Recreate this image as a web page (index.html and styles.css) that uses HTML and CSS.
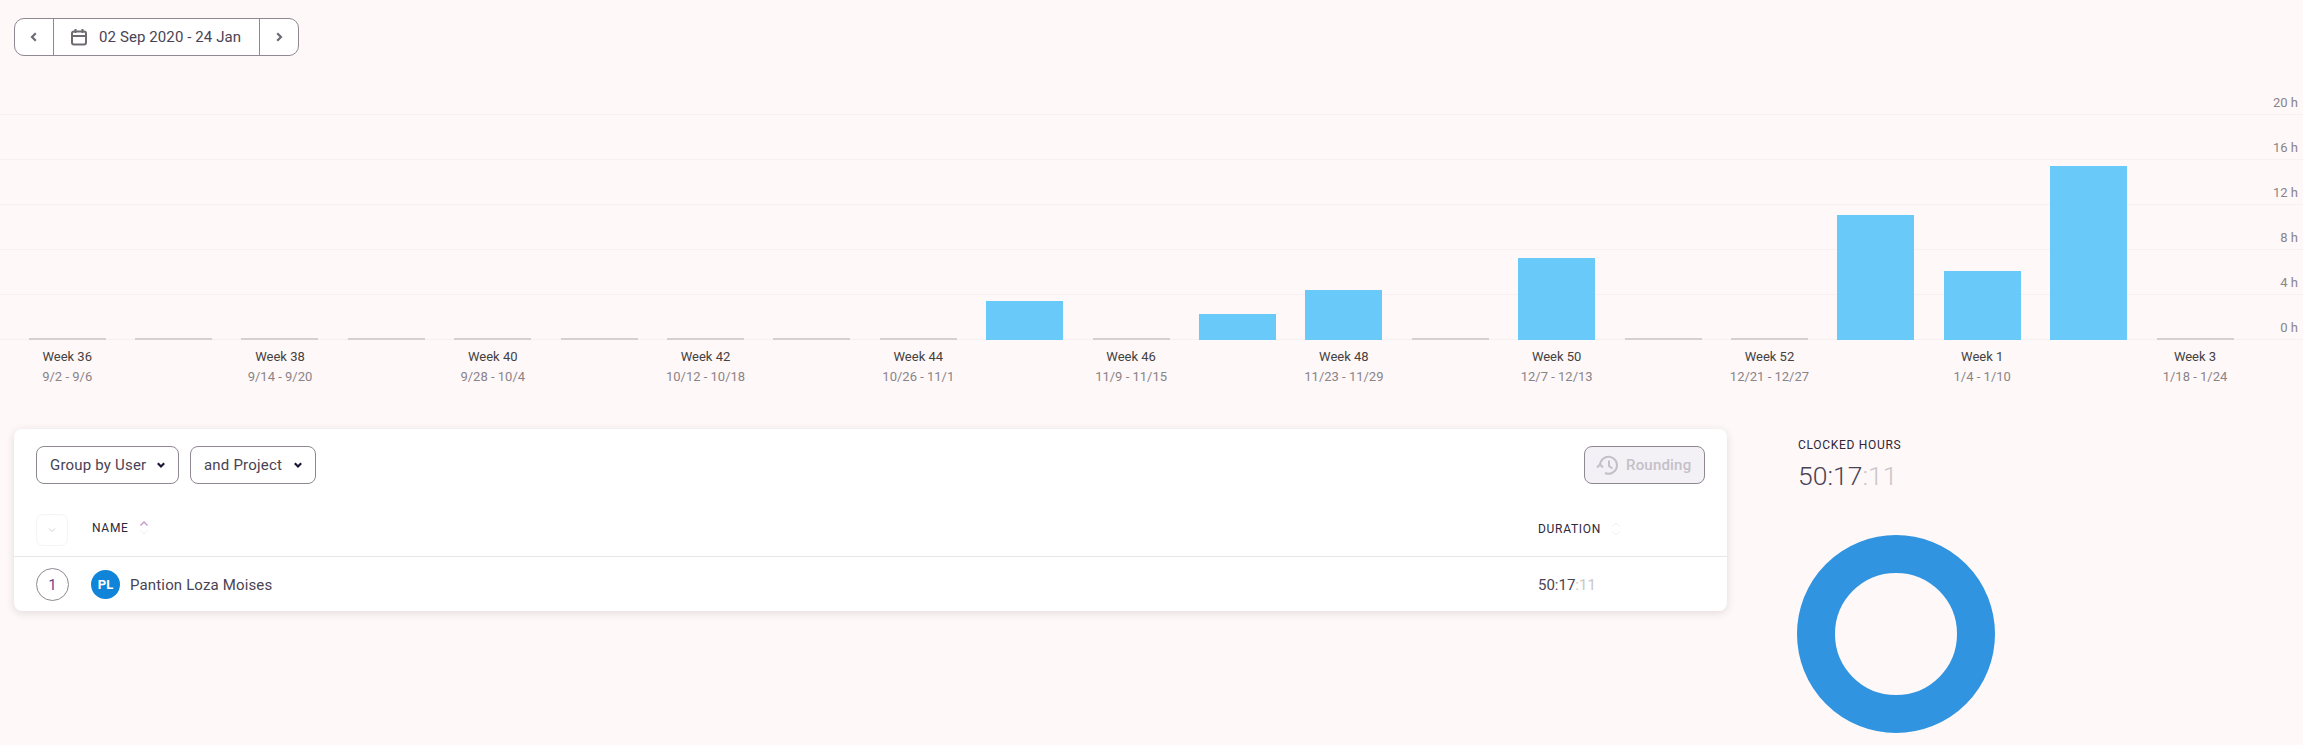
FILE: index.html
```html
<!DOCTYPE html>
<html lang="en">
<head>
  <meta charset="UTF-8" />
  <title>Clocked hours report</title>
  <link rel="stylesheet" href="styles.css">
</head>
<body>

  <div class="date-picker">
    <button class="date-arrow">
      <svg width="12" height="12" viewBox="0 0 12 12"><path d="M7.800 2.200 4 6l3.800 3.800" /></svg>
    </button>
    <button class="date-range">
      <svg width="18" height="18" viewBox="0 0 18 18"><rect x="2" y="3.500" width="14" height="13" rx="2" /><path d="M2 8h14M5.500 1v4M12.500 1v4" /></svg>
      <span>02 Sep 2020 - 24 Jan</span>
    </button>
    <button class="date-arrow">
      <svg width="12" height="12" viewBox="0 0 12 12"><path d="M4.200 2.200 8 6l-3.800 3.800" /></svg>
    </button>
  </div>

  <div class="chart">
    <div class="chart-lines">
      <div class="chart-line">20 h</div>
      <div class="chart-line">16 h</div>
      <div class="chart-line">12 h</div>
      <div class="chart-line">8 h</div>
      <div class="chart-line">4 h</div>
      <div class="chart-line">0 h</div>
    </div>
    <div class="chart-bars">
      <div class="bar empty"></div>
      <div class="bar empty"></div>
      <div class="bar empty"></div>
      <div class="bar empty"></div>
      <div class="bar empty"></div>
      <div class="bar empty"></div>
      <div class="bar empty"></div>
      <div class="bar empty"></div>
      <div class="bar empty"></div>
      <div class="bar" style="height: 39px"></div>
      <div class="bar empty"></div>
      <div class="bar" style="height: 26px"></div>
      <div class="bar" style="height: 50px"></div>
      <div class="bar empty"></div>
      <div class="bar" style="height: 82px"></div>
      <div class="bar empty"></div>
      <div class="bar empty"></div>
      <div class="bar" style="height: 125px"></div>
      <div class="bar" style="height: 69px"></div>
      <div class="bar" style="height: 174px"></div>
      <div class="bar empty"></div>
    </div>
  </div>

  <div class="weeks">
    <div class="week"><b>Week 36</b><span>9/2 - 9/6</span></div>
    <div class="week"><b>Week 38</b><span>9/14 - 9/20</span></div>
    <div class="week"><b>Week 40</b><span>9/28 - 10/4</span></div>
    <div class="week"><b>Week 42</b><span>10/12 - 10/18</span></div>
    <div class="week"><b>Week 44</b><span>10/26 - 11/1</span></div>
    <div class="week"><b>Week 46</b><span>11/9 - 11/15</span></div>
    <div class="week"><b>Week 48</b><span>11/23 - 11/29</span></div>
    <div class="week"><b>Week 50</b><span>12/7 - 12/13</span></div>
    <div class="week"><b>Week 52</b><span>12/21 - 12/27</span></div>
    <div class="week"><b>Week 1</b><span>1/4 - 1/10</span></div>
    <div class="week"><b>Week 3</b><span>1/18 - 1/24</span></div>
  </div>

  <div class="bottom">
    <div class="card">
      <div class="toolbar">
        <div class="toolbar-left">
          <button class="select group-user">Group by User
            <svg width="10" height="10" viewBox="0 0 10 10"><path d="M1.800 3.300 5 6.500l3.200-3.200" /></svg>
          </button>
          <button class="select group-project">and Project
            <svg width="10" height="10" viewBox="0 0 10 10"><path d="M1.800 3.300 5 6.500l3.200-3.200" /></svg>
          </button>
        </div>
        <button class="rounding">
          <svg width="24" height="24" viewBox="0 0 24 24"><path d="M9 20a8.500 8.500 0 1 0-5-8" /><path d="M1 14.500 4 11.500l3 3" /><path d="M13 7.500V13l3.500 2.500" /></svg>
          Rounding
        </button>
      </div>

      <div class="table-row table-head">
        <div class="check">
          <svg width="10" height="10" viewBox="0 0 10 10"><path d="M2 3.500 5 6.500l3-3" /></svg>
        </div>
        <div class="head-name">NAME
          <svg class="sort" width="10" height="14" viewBox="0 0 10 14"><path class="on" d="M1.500 4.500 5 1 8.500 4.500" /><path d="M1.500 9.500 5 13 8.500 9.500" /></svg>
        </div>
        <div class="head-duration">DURATION
          <svg class="sort" width="10" height="14" viewBox="0 0 10 14"><path d="M1.500 4.500 5 1 8.500 4.500" /><path d="M1.500 9.500 5 13 8.500 9.500" /></svg>
        </div>
      </div>

      <div class="table-row table-body">
        <div class="num">1</div>
        <div class="user"><span class="avatar">PL</span>Pantion Loza Moises</div>
        <div class="time">50:17<span class="secs">:11</span></div>
      </div>
    </div>

    <div class="side">
      <div class="side-title">CLOCKED HOURS</div>
      <div class="side-value">50:17<span class="secs">:11</span></div>
      <div class="donut"></div>
    </div>
  </div>

</body>
</html>
```

FILE: styles.css
```css
* {
  box-sizing: border-box;
}
body {
  font-family: Roboto, sans-serif;
  background-color: #fef8f8;
  color: #4a4354;
  margin: 0;
  height: 745px;
  overflow: hidden;
}
button {
  font-family: inherit;
  color: inherit;
  padding: 0;
}
svg {
  display: block;
  fill: none;
  stroke: currentColor;
}

/* date picker */
.date-picker {
  display: flex;
  width: 285px;
  height: 38px;
  margin: 18px 0 0 14px;
  background: #fff;
  border: 1px solid #8f8791;
  border-radius: 10px;
  overflow: hidden;
}
.date-arrow {
  display: flex;
  align-items: center;
  justify-content: center;
  width: 38px;
  border: none;
  background: none;
  color: #6f6a72;
}
.date-arrow svg {
  stroke-width: 2.2;
}
.date-range {
  display: flex;
  align-items: center;
  gap: 11px;
  flex: 1;
  padding-left: 16px;
  border: none;
  border-left: 1px solid #8f8791;
  border-right: 1px solid #8f8791;
  background: none;
  font-size: 15px;
  letter-spacing: 0.1px;
}
.date-range svg {
  color: #6f6a72;
  stroke-width: 2;
}

/* chart */
.chart {
  display: grid;
  grid-template-columns: minmax(0, 1fr);
  margin-top: 14px;
  height: 270px;
}
.chart-lines,
.chart-bars {
  grid-area: 1 / 1;
}
.chart-line {
  display: flex;
  align-items: flex-end;
  justify-content: flex-end;
  height: 45px;
  padding: 0 5px 3px 0;
  border-bottom: 1px solid #f8f0f0;
  font-size: 13px;
  line-height: 16px;
  color: #8a8488;
}
.chart-bars,
.weeks {
  display: grid;
  grid-template-columns: repeat(21, 106.4px);
  padding-left: 14px;
}
.chart-bars {
  align-items: end;
}
.bar {
  justify-self: center;
  width: 77px;
  background: #69caf9;
}
.bar.empty {
  height: 2px;
  background: #d6d0d0;
}
.weeks {
  margin-top: 7px;
  height: 40px;
}
.week {
  display: flex;
  flex-direction: column;
  align-items: center;
  grid-column: span 2;
  width: 106.4px;
  font-size: 13px;
  line-height: 20px;
  white-space: nowrap;
}
.week:last-child {
  grid-column: span 1;
}
.week b {
  font-weight: 400;
  color: #45413f;
}
.week span {
  color: #8a8488;
}

/* table card */
.bottom {
  display: flex;
  margin-top: 42px;
  padding-left: 14px;
}
.card {
  width: 1713px;
  height: 182px;
  background: #fff;
  border-radius: 8px;
  box-shadow: 0 2px 8px rgba(60, 40, 60, 0.14);
}
.toolbar {
  display: flex;
  justify-content: space-between;
  padding: 17px 22px 0;
}
.toolbar-left {
  display: flex;
  gap: 11px;
}
.select,
.rounding {
  display: flex;
  align-items: center;
  height: 38px;
  border: 1px solid #8f8791;
  border-radius: 8px;
  font-size: 15px;
  letter-spacing: 0.2px;
}
.select {
  justify-content: space-between;
  padding: 0 12px 0 13px;
  background: #fff;
}
.select svg {
  color: #1c1433;
  stroke-width: 2.2;
}
.group-user {
  width: 143px;
}
.group-project {
  width: 126px;
}
.rounding {
  gap: 6px;
  width: 121px;
  padding-left: 11px;
  background: #f3f1f5;
  color: #c5c0c8;
  font-weight: 500;
}
.rounding svg {
  stroke-width: 2;
}
.table-row {
  display: grid;
  grid-template-columns: 55px 1fr 167px;
  align-items: center;
  padding: 0 22px;
}
.table-head {
  margin-top: 30px;
  padding-bottom: 10px;
  border-bottom: 1px solid #e9e6ea;
  font-size: 12px;
  letter-spacing: 0.7px;
  color: #2f2739;
}
.check {
  display: flex;
  align-items: center;
  justify-content: center;
  width: 32px;
  height: 32px;
  border: 1px solid #f6f3f5;
  border-radius: 7px;
  color: #d5d0d6;
}
.head-name,
.head-duration {
  display: flex;
  align-items: center;
  gap: 10px;
}
.head-name {
  padding: 0 0 5px 1px;
}
.head-duration {
  padding-bottom: 2px;
}
.sort {
  color: #efedf0;
}
.sort .on {
  stroke: #c995cb;
  stroke-width: 1.3;
}
.table-body {
  padding-top: 11px;
  padding-bottom: 10px;
  font-size: 15px;
}
.num {
  display: flex;
  align-items: center;
  justify-content: center;
  width: 33px;
  height: 33px;
  border: 1px solid #8f8791;
  border-radius: 50%;
  color: #6c3f96;
}
.user {
  display: flex;
  align-items: center;
  gap: 10px;
  letter-spacing: 0.15px;
}
.avatar {
  display: flex;
  align-items: center;
  justify-content: center;
  width: 29px;
  height: 29px;
  border-radius: 50%;
  background: #0f84d8;
  color: #fff;
  font-size: 13px;
  font-weight: 700;
  letter-spacing: 0;
}
.secs {
  color: #c9c5c9;
}

/* side panel */
.side {
  margin-left: 71px;
}
.side-title {
  margin-top: 9px;
  font-size: 12px;
  line-height: 14px;
  letter-spacing: 0.7px;
  color: #2f2739;
}
.side-value {
  margin-top: 7px;
  font-size: 26.500px;
  font-weight: 300;
  line-height: 34px;
}
.donut {
  width: 198px;
  height: 198px;
  margin-top: 42px;
  margin-left: -1px;
  border: 38.500px solid #3094e0;
  border-radius: 50%;
}
```
